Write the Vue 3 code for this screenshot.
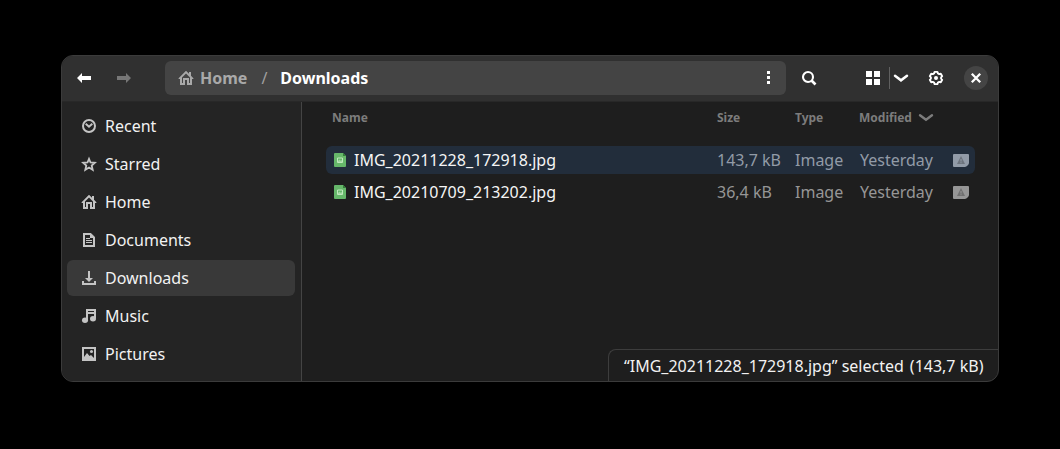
<script setup>
const places = [
  { name: 'Recent', icon: 'recent' },
  { name: 'Starred', icon: 'star' },
  { name: 'Home', icon: 'home' },
  { name: 'Documents', icon: 'document' },
  { name: 'Downloads', icon: 'download', active: true },
  { name: 'Music', icon: 'music' },
  { name: 'Pictures', icon: 'picture' },
]
const files = [
  { name: 'IMG_20211228_172918.jpg', size: '143,7 kB', type: 'Image', modified: 'Yesterday', selected: true },
  { name: 'IMG_20210709_213202.jpg', size: '36,4 kB', type: 'Image', modified: 'Yesterday' },
]
const house = 'M8 .8L.6 8.2V9H2v6h5v-5h2v5h5V9h1.4v-.8L13 5.8V2h-2v1.8zM8 3.6l4 4V13h-1V8H5v5H4V7.6z'
</script>

<template>
  <main class="desktop">
    <section class="window">
      <header class="bar">
        <svg class="icon back" viewBox="0 0 16 16"><path d="M1 8l5-5v3h9v4H6v3z" fill="#fff" /></svg>
        <svg class="icon forward" viewBox="0 0 16 16"><path d="M15 8l-5-5v3H1v4h9v3z" fill="#777" /></svg>
        <nav class="path">
          <svg class="icon" viewBox="0 0 16 16"><path :d="house" fill="#a9a9a9" fill-rule="evenodd" /></svg>
          <span class="crumb">Home</span>
          <span class="slash">/</span>
          <span class="current">Downloads</span>
          <svg class="icon dots" viewBox="0 0 16 16"><path d="M7 1h3v3H7zM7 6h3v3H7zM7 11h3v3H7z" fill="#fff" /></svg>
        </nav>
        <svg class="icon search" viewBox="0 0 16 16"><circle cx="7" cy="7" r="5" fill="none" stroke="#fff" stroke-width="2.1" /><path d="M10.5 10.5l4 4" stroke="#fff" stroke-width="2.6" /></svg>
        <svg class="icon grid" viewBox="0 0 16 16"><path d="M1 1h6v6H1zM9 1h6v6H9zM1 9h6v6H1zM9 9h6v6H9z" fill="#fff" /></svg>
        <i class="divider"></i>
        <svg class="icon chevron" viewBox="0 0 16 16"><path d="M2 5.7l6 4.6 6-4.6" fill="none" stroke="#fff" stroke-width="2.5" stroke-linecap="round" /></svg>
        <svg class="icon gear" viewBox="0 0 16 16">
          <path d="M6.6 1.9h2.8l.5 1.5 1.3.7 1.6-.3 1.4 2.4L13.1 7.3v1.4l1.1 1.1-1.4 2.4-1.6-.3-1.3.7-.5 1.5H6.6l-.5-1.5-1.3-.7-1.6.3-1.4-2.4 1.1-1.1V7.3L1.8 6.2l1.4-2.4 1.6.3 1.3-.7z" fill="none" stroke="#fff" stroke-width="1.9" stroke-linejoin="round" />
          <circle cx="8" cy="8" r="2" fill="#fff" />
        </svg>
        <span class="close"><svg class="icon" viewBox="0 0 16 16"><path d="M3.8 3.8l8.4 8.4M12.2 3.8l-8.4 8.4" stroke="#fff" stroke-width="2.3" /></svg></span>
      </header>

      <div class="body">
        <aside class="sidebar">
          <div v-for="p in places" :key="p.name" class="place" :class="{ active: p.active }">
            <svg class="icon" viewBox="0 0 16 16" fill="none" stroke="#c4c4c4" stroke-width="2">
              <template v-if="p.icon === 'recent'"><circle cx="8" cy="8" r="6" /><path d="M4.7 5.8L8 8.7l3.3-2.9" stroke-width="2" /></template>
              <path v-else-if="p.icon === 'star'" d="M8 2.8l1.5 3.7 4.3.3-3.1 2.7 1 4.3L8 11.6l-3.7 2.2 1-4.3-3.1-2.7 4.3-.3z" stroke-width="1.8" />
              <path v-else-if="p.icon === 'home'" :d="house" fill="#c4c4c4" fill-rule="evenodd" stroke="none" />
              <template v-else-if="p.icon === 'document'"><path d="M3 2h6.5L13 5.5V14H3z" /><path d="M5 6.5h4M5 8.5h6M5 10.5h6" stroke-width="1" /><path d="M9 2v4h4z" fill="#c4c4c4" stroke="none" /></template>
              <template v-else-if="p.icon === 'download'"><path d="M8 1v8M2 11v3h12v-3" /><path d="M4 8h8l-4 4z" fill="#c4c4c4" stroke="none" /></template>
              <template v-else-if="p.icon === 'music'"><path d="M6 12V2h8v8M6 5h8" /><ellipse cx="4" cy="12.3" rx="3" ry="2.7" fill="#c4c4c4" stroke="none" /><ellipse cx="12" cy="10.8" rx="3" ry="2.7" fill="#c4c4c4" stroke="none" /></template>
              <template v-else><path d="M2 2h12v12H2z" /><path d="M3 13v-2l3-4 2.5 3L10 9l3 3v1z" fill="#c4c4c4" stroke="none" /><circle cx="10.5" cy="5.5" r="1.5" fill="#c4c4c4" stroke="none" /></template>
            </svg>
            <span>{{ p.name }}</span>
          </div>
        </aside>

        <div class="content">
          <div class="row heading">
            <span class="name">Name</span><span>Size</span><span>Type</span>
            <span class="sorted">Modified
              <svg class="icon" viewBox="0 0 16 16"><path d="M2 5.2l6 4.6 6-4.6" fill="none" stroke="#7c7c7c" stroke-width="2.4" stroke-linecap="round" /></svg>
            </span>
          </div>
          <div v-for="f in files" :key="f.name" class="row file" :class="{ selected: f.selected }">
            <span class="name">
              <svg class="icon" viewBox="0 0 16 16">
                <path d="M2 2a1 1 0 0 1 1-1h8l3 3v10a1 1 0 0 1-1 1H3a1 1 0 0 1-1-1z" fill="#66b76a" />
                <path d="M11 1v3h3z" fill="#337d39" />
                <path d="M5.5 6h5v4.5h-5z" fill="none" stroke="#c0e8bd" />
                <path d="M6 10V9l1.5-1.5L8.500 8.700l1-.7.5 1v1z" fill="#a5d8a4" />
              </svg>
              {{ f.name }}
            </span>
            <span>{{ f.size }}</span><span>{{ f.type }}</span><span class="date">{{ f.modified }}</span>
            <svg class="icon disk" viewBox="0 0 16 16">
              <path d="M1 2h14a1 1 0 0 1 1 1v7.500q0 1.500-1 2.500l-1 1q-1 1-2.500 1H1a1 1 0 0 1-1-1V3a1 1 0 0 1 1-1z" fill="currentColor" />
              <path d="M8 4l4 8H4z" fill="#000" opacity=".25" />
              <path d="M8 7v2.500M8 10.200v1" stroke="currentColor" />
            </svg>
          </div>
          <footer class="status"><span>“IMG_20211228_172918.jpg” selected</span><span>(143,7 kB)</span></footer>
        </div>
      </div>
    </section>
  </main>
</template>

<style>
body { background: #000; overflow: hidden; }
</style>

<style scoped>
* { box-sizing: border-box; }
.desktop { height: 449px; padding: 55px 61px 67px; background: #000; font: 16px/22px "Noto Sans", sans-serif; color: #f2f2f2; }
.window { height: 327px; display: flex; flex-direction: column; border: 1px solid #3b3b3b; border-radius: 12px; overflow: hidden; background: #1e1e1e; }
.icon { width: 16px; height: 16px; flex: none; display: block; }
.bar { height: 45px; padding: 0 10px 1px 14px; display: flex; align-items: center; background: #303030; flex: none; }
.forward { margin-left: 24px; }
.path { width: 621px; height: 34px; margin-left: 33px; padding: 0 10px 0 13px; border-radius: 6px; display: flex; align-items: center; background: #444; font-weight: 700; }
.crumb { margin-left: 6px; color: #a9a9a9; }
.slash { margin-left: 14px; color: #a0a0a0; font-weight: 400; }
.current { margin-left: 13px; color: #fff; }
.dots { margin-left: auto; }
.search { margin-left: 15px; }
.grid { margin-left: 48px; }
.divider { width: 1px; height: 22px; margin-left: 8px; background: #606060; }
.chevron { margin-left: 3px; }
.gear { margin-left: 19px; }
.close { width: 24px; height: 24px; margin-left: 20px; border-radius: 50%; background: #444; display: flex; align-items: center; justify-content: center; }
.body { flex: 1; display: flex; border-top: 1px solid #282828; min-height: 0; }
.sidebar { width: 240px; padding: 6px 6px 0 5px; border-right: 1px solid #444; background: #242424; }
.place { height: 36px; margin-bottom: 2px; padding-left: 14px; border-radius: 6px; display: flex; align-items: center; gap: 8px; }
.active { background: #393939; }
.content { flex: 1; display: flex; flex-direction: column; padding-left: 24px; }
.row { width: 649px; padding-left: 6px; display: grid; grid-template-columns: 385px 78px 65px 93px 16px; align-items: center; }
.heading { height: 31px; margin-bottom: 13px; font-size: 12px; font-weight: 700; color: #7c7c7c; }
.sorted { display: flex; align-items: center; gap: 6px; margin-left: -1px; }
.file { height: 28px; margin-bottom: 4px; border-radius: 6px; color: #969696; }
.file .name { display: flex; align-items: center; gap: 6px; color: #f5f5f5; }
.selected { background: #222d3b; color: #929ba7; }
.status { align-self: flex-end; display: flex; gap: 6px; width: 390px; height: 32px; margin-top: auto; padding-left: 15px; line-height: 33px; border: solid #3d3d3d; border-width: 1px 0 0 1px; border-top-left-radius: 8px; white-space: nowrap; }
</style>
